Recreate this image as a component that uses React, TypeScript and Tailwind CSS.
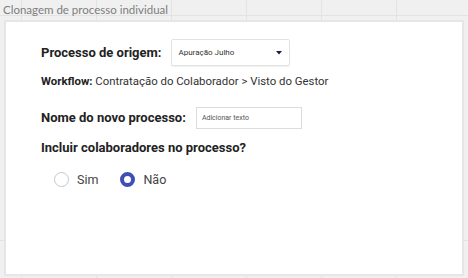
import { useState } from "react";

export default function App() {
    const [incluir, setIncluir] = useState("nao");

    return (
        <div className="relative w-[468px] h-[278px] overflow-hidden bg-[#f0f0f0] bg-[linear-gradient(to_right,#e3e3e3_1px,transparent_1px),linear-gradient(to_bottom,#e3e3e3_1px,transparent_1px)] bg-[length:75px_225px] bg-[position:21px_15px]">
            {/* Title */}
            <div className="pl-[3px] pt-[2px] text-[11.5px] leading-[15px] text-[#7d7d7d] font-['Lato',sans-serif] whitespace-nowrap">
                Clonagem de processo individual
            </div>

            {/* Card */}
            <div className="absolute left-[4px] top-[20px] w-[460px] h-[256px] bg-white border-2 border-[#e6e6e6] font-['Roboto',sans-serif] text-[#222]">
                <div className="pl-[35px] pt-[17px] flex flex-col">
                    <div className="flex items-center whitespace-nowrap">
                        <span className="text-[13px] font-bold">Processo de origem:</span>
                        <div className="ml-[10px] w-[119px] h-[27px] border border-[#e2e2e2] rounded-[2px] shadow-[0_1px_1px_rgba(0,0,0,0.06)] flex items-center justify-between pl-[6px] pr-[7px]">
                            <span className="text-[8px] text-[#333]">Apuração Julho</span>
                            <svg width="6" height="4" viewBox="0 0 6 4">
                                <path d="M0 0 L6 0 L3 3.5 Z" fill="#1d1d3a" />
                            </svg>
                        </div>
                    </div>

                    <div className="mt-[7px] text-[11.4px] text-[#333] whitespace-nowrap">
                        <span className="font-bold text-[#222]">Workflow:</span> Contratação do Colaborador &gt; Visto do Gestor
                    </div>

                    <div className="flex items-center mt-[17px] whitespace-nowrap">
                        <span className="text-[13px] font-bold">Nome do novo processo:</span>
                        <div className="ml-[10px] w-[106px] h-[22px] border border-[#dcdcdc] flex items-center pl-[5px]">
                            <span className="text-[7px] text-[#555]">Adicionar texto</span>
                        </div>
                    </div>

                    <div className="mt-[9px] text-[13px] font-bold whitespace-nowrap">Incluir colaboradores no processo?</div>

                    <div className="flex items-center mt-[13px] pl-[13px] text-[12.5px] text-[#444]">
                        <button onClick={() => setIncluir("sim")} className="flex items-center gap-[8px]">
                            <span className={`w-[15px] h-[15px] rounded-full ${incluir === "sim" ? "border-[4px] border-[#3f4fb3]" : "border border-[#c8c8c8]"}`} />
                            <span>Sim</span>
                        </button>
                        <button onClick={() => setIncluir("nao")} className="flex items-center gap-[8px] ml-[22px]">
                            <span className={`w-[15px] h-[15px] rounded-full ${incluir === "nao" ? "border-[4px] border-[#3f4fb3]" : "border border-[#c8c8c8]"}`} />
                            <span>Não</span>
                        </button>
                    </div>
                </div>
            </div>
        </div>
    );
}
